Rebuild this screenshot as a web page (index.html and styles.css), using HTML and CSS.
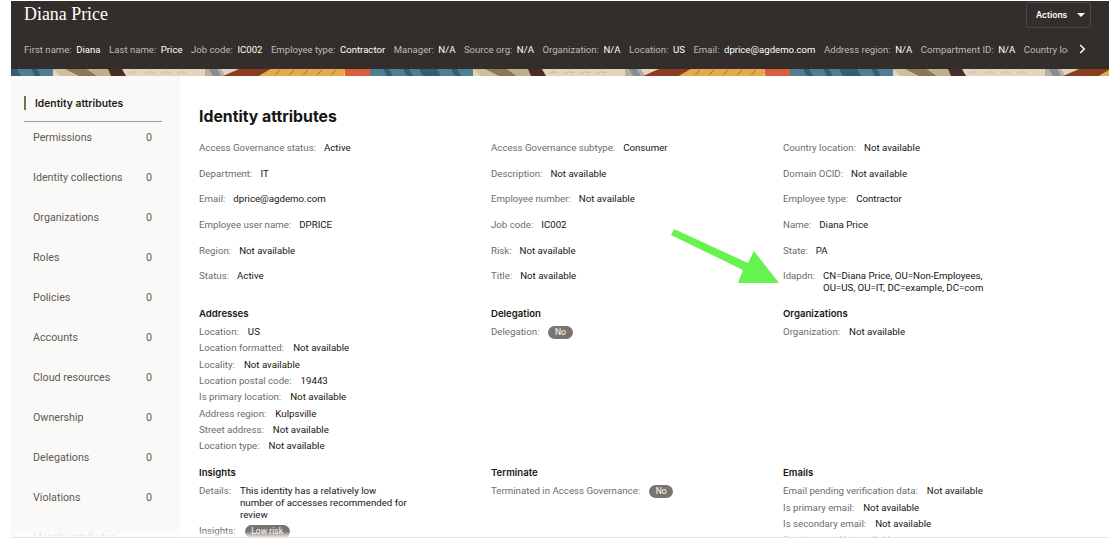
FILE: index.html
```html
<!DOCTYPE html>
<html lang="en">
<head>
<meta charset="utf-8">
<title>Diana Price</title>
<link rel="stylesheet" href="styles.css">
</head>
<body>
<div class="frame">
  <header class="head">
    <div class="head-top">
      <h1 class="name">Diana Price</h1>
      <button class="actions">Actions <svg class="caret" width="8" height="4" viewBox="0 0 8 4"><path d="M0 0h8L4 4z" fill="#fff"/></svg></button>
    </div>
    <div class="strip">
      <div class="strip-items">
        <span class="si"><span class="k">First name:</span><b>Diana</b></span>
        <span class="si"><span class="k">Last name:</span><b>Price</b></span>
        <span class="si"><span class="k">Job code:</span><b>IC002</b></span>
        <span class="si"><span class="k">Employee type:</span><b>Contractor</b></span>
        <span class="si"><span class="k">Manager:</span><b>N/A</b></span>
        <span class="si"><span class="k">Source org:</span><b>N/A</b></span>
        <span class="si"><span class="k">Organization:</span><b>N/A</b></span>
        <span class="si"><span class="k">Location:</span><b>US</b></span>
        <span class="si"><span class="k">Email:</span><b>dprice@agdemo.com</b></span>
        <span class="si"><span class="k">Address region:</span><b>N/A</b></span>
        <span class="si"><span class="k">Compartment ID:</span><b>N/A</b></span>
        <span class="si"><span class="k">Country location:</span><b>N/A</b></span>
      </div>
      <svg class="chev" width="7" height="10" viewBox="0 0 7 10"><path d="M1.2 1l4 4-4 4" fill="none" stroke="#fff" stroke-width="1.5"/></svg>
    </div>
  </header>
  <svg class="banner" width="1098" height="7" viewBox="0 0 1098 7">
    <defs>
      <pattern id="tile" x="42" y="0" width="420" height="7" patternUnits="userSpaceOnUse">
        <rect width="420" height="7" fill="#e0d6bd"/>
        <path d="M0 0h12l14 7H8z" fill="#cdbf9d"/>
        <path d="M12 0h22l10 7H26z" fill="#8c7656"/>
        <path d="M34 0h22l2 7H44z" fill="#bfae8a"/>
        <path d="M55 0h14l4 7H58z" fill="#4b2d27"/>
        <path d="M76 5c3-4 5-1 8-2M92 5c3-4 6-1 9-2M108 5c3-4 6-1 9-2M124 5c3-4 6-1 9-2" fill="none" stroke="#b5a888" stroke-width=".7"/>
        <path d="M152 0h16l4 7h-20z" fill="#b6ad9a"/>
        <path d="M156 0h8l4 7h-8z" fill="#858c9a"/>
        <path d="M186 0h32l-12 7h-36z" fill="#8a3e1e"/>
        <path d="M218 0h76l-4 7h-84z" fill="#e3a94b"/>
        <path d="M222 6l5-5M236 6l5-5M250 6l5-5M264 6l5-5M278 6l5-5" fill="none" stroke="#8c5c22" stroke-width=".7"/>
        <rect x="292" width="25" height="7" fill="#d95f3a"/>
        <rect x="317" width="103" height="7" fill="#4f7f93"/>
        <path d="M330 0h6l4 7h-6zM350 0h6l4 7h-6zM366 0h18l4 7h-18zM398 0h6l4 7h-6z" fill="#365d6d"/>
      </pattern>
    </defs>
    <rect width="1098" height="7" fill="url(#tile)"/>
  </svg>
  <div class="body">
    <nav class="side">
      <div class="side-active"><span class="bar"></span>Identity attributes</div>
      <ul class="side-list">
        <li><span>Permissions</span><span>0</span></li>
        <li><span>Identity collections</span><span>0</span></li>
        <li><span>Organizations</span><span>0</span></li>
        <li><span>Roles</span><span>0</span></li>
        <li><span>Policies</span><span>0</span></li>
        <li><span>Accounts</span><span>0</span></li>
        <li><span>Cloud resources</span><span>0</span></li>
        <li><span>Ownership</span><span>0</span></li>
        <li><span>Delegations</span><span>0</span></li>
        <li><span>Violations</span><span>0</span></li>
        <li class="faded"><span>Identity attributes</span></li>
      </ul>
    </nav>
    <main class="main">
      <h2 class="title">Identity attributes</h2>
      <div class="grid">
        <div class="f"><span class="k">Access Governance status:</span><span class="v">Active</span></div>
        <div class="f"><span class="k">Access Governance subtype:</span><span class="v">Consumer</span></div>
        <div class="f"><span class="k">Country location:</span><span class="v">Not available</span></div>
        <div class="f"><span class="k">Department:</span><span class="v">IT</span></div>
        <div class="f"><span class="k">Description:</span><span class="v">Not available</span></div>
        <div class="f"><span class="k">Domain OCID:</span><span class="v">Not available</span></div>
        <div class="f"><span class="k">Email:</span><span class="v">dprice@agdemo.com</span></div>
        <div class="f"><span class="k">Employee number:</span><span class="v">Not available</span></div>
        <div class="f"><span class="k">Employee type:</span><span class="v">Contractor</span></div>
        <div class="f"><span class="k">Employee user name:</span><span class="v">DPRICE</span></div>
        <div class="f"><span class="k">Job code:</span><span class="v">IC002</span></div>
        <div class="f"><span class="k">Name:</span><span class="v">Diana Price</span></div>
        <div class="f"><span class="k">Region:</span><span class="v">Not available</span></div>
        <div class="f"><span class="k">Risk:</span><span class="v">Not available</span></div>
        <div class="f"><span class="k">State:</span><span class="v">PA</span></div>
        <div class="f"><span class="k">Status:</span><span class="v">Active</span></div>
        <div class="f"><span class="k">Title:</span><span class="v">Not available</span></div>
        <div class="f"><span class="k">Idapdn:</span><span class="v ldap">CN=Diana Price, OU=Non-Employees, OU=US, OU=IT, DC=example, DC=com</span></div>
      </div>
      <div class="sections">
        <section>
          <h3>Addresses</h3>
          <div class="r"><span class="k">Location:</span><span class="v">US</span></div>
          <div class="r"><span class="k">Location formatted:</span><span class="v">Not available</span></div>
          <div class="r"><span class="k">Locality:</span><span class="v">Not available</span></div>
          <div class="r"><span class="k">Location postal code:</span><span class="v">19443</span></div>
          <div class="r"><span class="k">Is primary location:</span><span class="v">Not available</span></div>
          <div class="r"><span class="k">Address region:</span><span class="v">Kulpsville</span></div>
          <div class="r"><span class="k">Street address:</span><span class="v">Not available</span></div>
          <div class="r"><span class="k">Location type:</span><span class="v">Not available</span></div>
        </section>
        <section>
          <h3>Delegation</h3>
          <div class="r"><span class="k">Delegation:</span><span class="pill">No</span></div>
        </section>
        <section>
          <h3>Organizations</h3>
          <div class="r"><span class="k">Organization:</span><span class="v">Not available</span></div>
        </section>
        <section>
          <h3>Insights</h3>
          <div class="r"><span class="k">Details:</span><span class="v details">This identity has a relatively low number of accesses recommended for review</span></div>
          <div class="r"><span class="k">Insights:</span><span class="pill">Low risk</span></div>
        </section>
        <section>
          <h3>Terminate</h3>
          <div class="r"><span class="k">Terminated in Access Governance:</span><span class="pill">No</span></div>
        </section>
        <section>
          <h3>Emails</h3>
          <div class="r"><span class="k">Email pending verification data:</span><span class="v">Not available</span></div>
          <div class="r"><span class="k">Is primary email:</span><span class="v">Not available</span></div>
          <div class="r"><span class="k">Is secondary email:</span><span class="v">Not available</span></div>
          <div class="r"><span class="k">Email type:</span><span class="v">Not available</span></div>
        </section>
      </div>
    </main>
  </div>
  <svg class="arrow" width="112" height="60" viewBox="0 0 112 60"><path d="M4 1L78 35 84 23 109 55H68L73 42 1 7z" fill="#66f24f"/></svg>
  <div class="fade"></div>
</div>
</body>
</html>
```
FILE: styles.css
```css
* { box-sizing: border-box; }
html, body { margin: 0; padding: 0; background: #fff; }
body { font-family: Roboto, "Liberation Sans", sans-serif; font-size: 9.7px; color: #161513; overflow: hidden; height: 546px; }
.frame { position: relative; width: 1098px; height: 537px; margin: 1px 0 0 11px; overflow: hidden; border-bottom: 1px solid #e4e3e1; }
.head { background: #332e2b; height: 68px; padding: 0 13px; color: #fff; }
.head-top { display: flex; justify-content: space-between; align-items: flex-start; height: 27px; padding-right: 5px; }
.name { font-family: "Liberation Serif", serif; font-weight: 400; font-size: 17.9px; margin: 4px 0 0; line-height: 18px; }
.actions { display: flex; align-items: center; gap: 10px; width: 65px; height: 26px; margin-top: 1px; background: none; border: 1px solid #4d4844; border-radius: 3px; color: #fff; font: 600 8.5px Inter, sans-serif; padding: 0 0 0 9px; }
.strip { display: flex; align-items: center; justify-content: space-between; height: 24px; margin-top: 9px; font-size: 9.6px; }
.strip-items { display: flex; gap: 8.5px; width: 1044px; overflow: hidden; white-space: nowrap; }
.si { display: flex; gap: 4.5px; }
.si .k { color: #bdbab6; }
.si b { font-weight: 400; color: #fff; }
.chev { margin-right: 10px; }
.banner { display: block; }
.body { display: flex; height: 462px; }
.side { width: 169px; background: #faf9f7; padding: 20px 18px 0 13px; flex: none; }
.side-active { display: flex; align-items: center; font: 600 10.3px Inter, sans-serif; height: 14px; gap: 9px; margin-bottom: 11px; color: #1f1c19; }
.bar { width: 2px; height: 14px; background: #5f7d4f; }
.side-list { list-style: none; margin: 0; padding: 0; border-top: 1px solid #9e9b97; }
.side-list li { display: flex; justify-content: space-between; height: 40px; padding: 9px 10px 0 9px; font-size: 10.7px; line-height: 14px; color: #5d5954; }
.side-list li.faded { color: #cfcdca; }
.main { flex: 1; padding: 31px 0 0 19px; }
.title { font: 700 15.8px/20px Inter, sans-serif; margin: 0 0 15px; color: #161513; }
.grid { display: grid; grid-template-columns: 292px 292px 1fr; grid-auto-rows: 25.7px; }
.f { display: flex; gap: 8px; line-height: 12px; }
.k { color: #6f6b67; white-space: nowrap; }
.v { color: #161513; }
.ldap { width: 180px; }
.sections { display: grid; grid-template-columns: 292px 292px 1fr; margin-top: 11px; }
.sections section { padding-bottom: 10px; }
h3 { font: 600 9.6px/14px Inter, sans-serif; margin: 0 0 5px; color: #161513; }
.r { display: flex; gap: 9px; line-height: 11.6px; margin-bottom: 4.7px; }
.pill { display: inline-block; background: #7a736e; color: #fff; border-radius: 7px; height: 13px; line-height: 13px; padding: 0 6.5px; font-size: 8.6px; }
.details { width: 170px; }
.arrow { position: absolute; left: 659px; top: 227px; }
.fade { position: absolute; left: 0; right: 0; bottom: 0; height: 6px; background: linear-gradient(rgba(255,255,255,0), rgba(255,255,255,.8)); }
```
